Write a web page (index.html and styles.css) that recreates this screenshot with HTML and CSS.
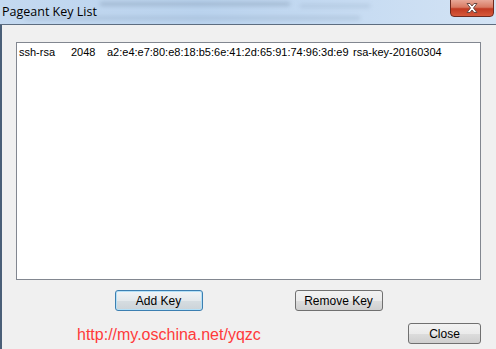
FILE: index.html
```html
<!DOCTYPE html>
<html lang="en">
<head>
  <meta charset="UTF-8">
  <title>Pageant Key List</title>
  <link rel="stylesheet" href="styles.css">
</head>
<body>
  <div class="window">
    <div class="titlebar">
      <span class="title">Pageant Key List</span>
      <div class="smudge smudge-1"></div>
      <div class="smudge smudge-2"></div>
      <div class="smudge smudge-3"></div>
      <div class="close-btn">
        <svg width="18" height="10" viewBox="0 0 18 10">
          <path d="M4 0.5h3l2 2.5l2-2.5h3l-3.5 4.5l3.5 4.5h-3l-2-2.5l-2 2.5h-3l3.5-4.5z" fill="#fff" stroke="#6a4a44" stroke-width="1"/>
        </svg>
      </div>
    </div>

    <div class="client">
      <div class="listbox">
        <div class="key-row">
          <span class="col-type">ssh-rsa</span>
          <span class="col-bits">2048</span>
          <span class="col-fp">a2:e4:e7:80:e8:18:b5:6e:41:2d:65:91:74:96:3d:e9</span>
          <span class="col-name">rsa-key-20160304</span>
        </div>
      </div>

      <div class="button-row">
        <button class="btn btn-default">Add Key</button>
        <button class="btn">Remove Key</button>
      </div>

      <div class="footer-row">
        <span class="watermark">http://my.oschina.net/yqzc</span>
        <button class="btn btn-close">Close</button>
      </div>
    </div>
  </div>
</body>
</html>
```

FILE: styles.css
```css
body {
  margin: 0;
  font-family: "Liberation Sans", Arial, sans-serif;
  background: #f0f0f0;
}
.window {
  width: 496px;
  height: 349px;
  overflow: hidden;
  display: flex;
  flex-direction: column;
}
.titlebar {
  position: relative;
  height: 24px;
  border-bottom: 1px solid #5d6d80;
  background: linear-gradient(90deg, #c4d9f0 0%, #bad3ee 40%, #c6dbf2 70%, #d3e3f4 100%);
  overflow: hidden;
}
.title {
  position: relative;
  z-index: 2;
  display: block;
  padding: 3px 0 0 2px;
  font-family: "Open Sans", "Noto Sans", sans-serif;
  font-size: 12.5px;
  color: #000;
}
.smudge {
  position: absolute;
  height: 4px;
  background: #8fa5bd;
  filter: blur(2px);
  opacity: 0.6;
}
.smudge-1 {
  left: 100px;
  top: 2px;
  width: 190px;
}
.smudge-2 {
  left: 25px;
  top: 16px;
  width: 335px;
  opacity: 0.35;
}
.smudge-3 {
  left: 300px;
  top: 4px;
  width: 70px;
  opacity: 0.3;
}
.close-btn {
  position: absolute;
  z-index: 2;
  left: 450px;
  top: -1px;
  width: 42px;
  height: 16px;
  border: 1px solid #6e2a20;
  border-radius: 0 0 4px 4px;
  background: linear-gradient(#e8a898 0%, #d87a63 45%, #c13a22 55%, #d7593b 100%);
  display: flex;
  align-items: center;
  justify-content: center;
}
.client {
  flex: 1;
  border-left: 2px solid #4a5f78;
  padding: 17px 15px 0 14px;
}
.listbox {
  height: 236px;
  border: 1px solid #828790;
  background: #fff;
}
.key-row {
  display: flex;
  padding: 3px 0 0 2px;
  font-size: 11px;
  color: #000;
  white-space: nowrap;
}
.col-type {
  width: 52px;
}
.col-bits {
  width: 36px;
}
.col-fp {
  width: 246px;
}
.button-row {
  display: flex;
  justify-content: center;
  gap: 92px;
  margin-top: 10px;
}
.btn {
  width: 88px;
  height: 21px;
  padding: 0;
  border: 1px solid #707070;
  border-radius: 3px;
  background: linear-gradient(#f2f2f2 0%, #ebebeb 50%, #dddddd 51%, #cfcfcf 100%);
  font-family: "Liberation Sans", Arial, sans-serif;
  font-size: 12px;
  color: #000;
}
.btn-default {
  border-color: #3c7fb1;
  box-shadow: inset 0 0 0 1px #b4e0f7;
  background: linear-gradient(#f1f4f6 0%, #e4e9ec 50%, #d6dde1 51%, #ccd3d8 100%);
}
.footer-row {
  display: flex;
  justify-content: space-between;
  align-items: center;
  margin-top: 12px;
  padding-left: 61px;
}
.watermark {
  font-size: 16px;
  color: #ff3a3a;
  margin-top: 2px;
}
.btn-close {
  width: 73px;
}
```
